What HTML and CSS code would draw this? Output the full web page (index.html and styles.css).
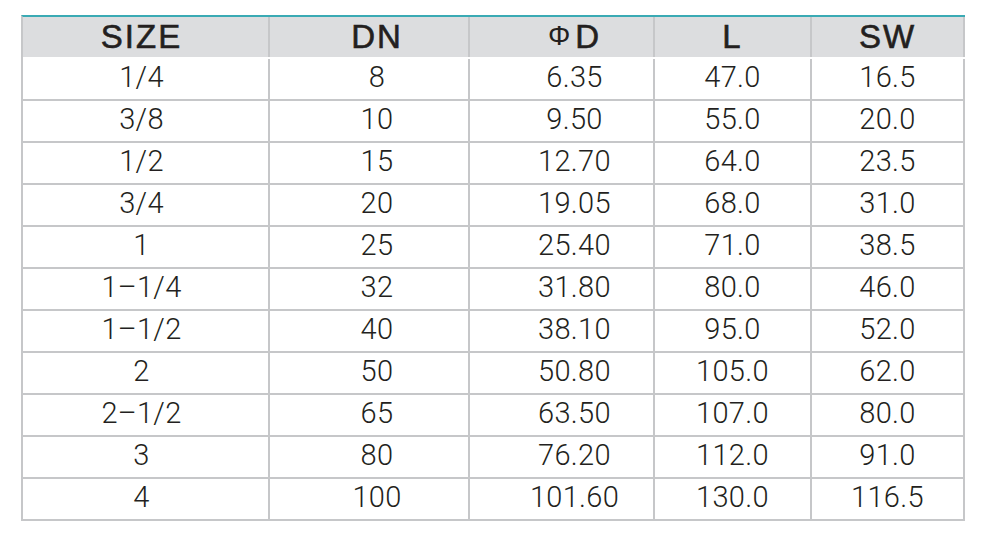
FILE: index.html
```html
<!DOCTYPE html>
<html lang="en">
<head>
<meta charset="utf-8">
<title>Size table</title>
<link rel="stylesheet" href="styles.css">
</head>
<body>
<div class="spec">
  <div class="cell head c1">SIZE</div>
  <div class="cell head c2">DN</div>
  <div class="cell head c3"><span class="phi">Φ</span>D</div>
  <div class="cell head c4">L</div>
  <div class="cell head c5">SW</div>

  <div class="cell c1">1/4</div><div class="cell c2">8</div><div class="cell c3">6.35</div><div class="cell c4">47.0</div><div class="cell c5">16.5</div>
  <div class="cell c1">3/8</div><div class="cell c2">10</div><div class="cell c3">9.50</div><div class="cell c4">55.0</div><div class="cell c5">20.0</div>
  <div class="cell c1">1/2</div><div class="cell c2">15</div><div class="cell c3">12.70</div><div class="cell c4">64.0</div><div class="cell c5">23.5</div>
  <div class="cell c1">3/4</div><div class="cell c2">20</div><div class="cell c3">19.05</div><div class="cell c4">68.0</div><div class="cell c5">31.0</div>
  <div class="cell c1">1</div><div class="cell c2">25</div><div class="cell c3">25.40</div><div class="cell c4">71.0</div><div class="cell c5">38.5</div>
  <div class="cell c1">1–1/4</div><div class="cell c2">32</div><div class="cell c3">31.80</div><div class="cell c4">80.0</div><div class="cell c5">46.0</div>
  <div class="cell c1">1–1/2</div><div class="cell c2">40</div><div class="cell c3">38.10</div><div class="cell c4">95.0</div><div class="cell c5">52.0</div>
  <div class="cell c1">2</div><div class="cell c2">50</div><div class="cell c3">50.80</div><div class="cell c4">105.0</div><div class="cell c5">62.0</div>
  <div class="cell c1">2–1/2</div><div class="cell c2">65</div><div class="cell c3">63.50</div><div class="cell c4">107.0</div><div class="cell c5">80.0</div>
  <div class="cell c1">3</div><div class="cell c2">80</div><div class="cell c3">76.20</div><div class="cell c4">112.0</div><div class="cell c5">91.0</div>
  <div class="cell c1">4</div><div class="cell c2">100</div><div class="cell c3">101.60</div><div class="cell c4">130.0</div><div class="cell c5">116.5</div>
</div>
</body>
</html>
```

FILE: styles.css
```css
html, body {
  margin: 0;
  padding: 0;
  background: #ffffff;
}

.spec {
  margin: 15px 0 0 21px;
  width: 944px;
  box-sizing: border-box;
  display: grid;
  grid-template-columns: 247px 200px 185px 157px 153px;
  grid-auto-rows: 42px;
  border-left: 2px solid #c6c7c9;
  border-top: 2px solid #3aaab4;
  color: #231f20;
}

.cell {
  box-sizing: border-box;
  border-right: 2px solid #c6c7c9;
  border-bottom: 2px solid #c6c7c9;
  display: flex;
  align-items: center;
  justify-content: center;
  font-family: Roboto, "Liberation Sans", sans-serif;
  font-weight: 300;
  font-size: 29px;
  letter-spacing: 0.3px;
  line-height: 1;
  padding-bottom: 4px;
}

.head {
  height: 40px;
  background: #dcdddf;
  border-bottom: none;
  font-family: "Liberation Sans", Arial, sans-serif;
  font-weight: 400;
  font-size: 33px;
  letter-spacing: 2px;
  -webkit-text-stroke: 0.6px #231f20;
  padding-bottom: 2px;
}

.c1 { padding-right: 8px; }
.c2 { padding-left: 16px; }
.c3 { padding-left: 26px; }

.phi {
  font-size: 28px;
  -webkit-text-stroke: 0;
  margin-right: 3px;
}
```
